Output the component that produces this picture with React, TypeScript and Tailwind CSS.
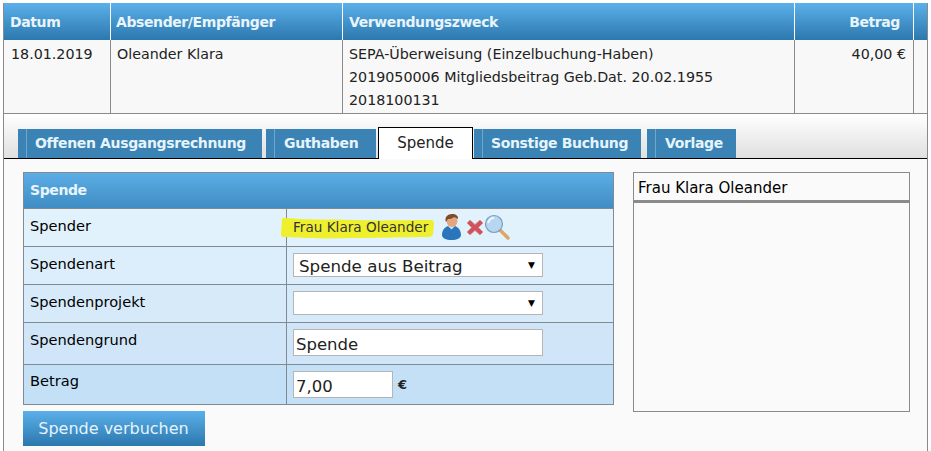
import React from 'react';

function Tab({ label, w, ml, pl }: { label: string; w: string; ml: string; pl: string }) {
  return (
    <div className={`flex h-[29px] items-center bg-[#3b83b5] font-bold tracking-[-0.35px] text-[#e6f4fc] ${w} ${ml}`}>
      <span className="h-full w-[9px] shrink-0 border-r border-[#6fa8ce]" />
      <span className={pl}>{label}</span>
    </div>
  );
}

function Highlight() {
  return (
    <svg className="absolute left-[-13px] top-[-1px]" width="156" height="24" viewBox="0 0 156 24">
      <path d="M2 5C1 2 3 1 6 2c20 2 40 1 70 2s50 0 74 0c3 0 4 1 4 4l-1 10c0 2-2 3-5 3-25 0-45 1-70 1-20 0-30 1-48 0-10 0-20-1-26-1-3 0-3-2-3-5z" fill="#eff02d" />
    </svg>
  );
}

function PersonIcon() {
  return (
    <svg width="19" height="26" viewBox="0 0 19 26">
      <path d="M0 21c0-5 3-8 6-9l3.500 3 3.500-3c3 1 6 4 6 9 0 3-4 5-9.500 5S0 24 0 21z" fill="#2a76bd" />
      <path d="M6 11.500l3.500 4 3.500-4-1-2H7z" fill="#d8e4ee" />
      <ellipse cx="10" cy="7" rx="5.500" ry="6" fill="#e2a77f" />
      <path d="M4 8C2 3 6 0 10 0s6.500 2 6 5c-2-1-3-2-4-2-2 2-5 2-6 2-1 1-1 2-2 3z" fill="#7d4a2b" />
    </svg>
  );
}

function CrossIcon() {
  return (
    <svg width="18" height="17" viewBox="0 0 18 17">
      <path d="M1 4l3-3 5 4.500L14 1l3 3-4.500 4.500L17 13l-3 3-5-4.500L4 16l-3-3 4.500-4.500z" fill="#d4505a" stroke="#c99a9e" strokeWidth="0.8" />
    </svg>
  );
}

function SearchIcon() {
  return (
    <svg width="26" height="26" viewBox="0 0 26 26">
      <path d="M16 16l8 8" stroke="#dca766" strokeWidth="3.500" strokeLinecap="round" />
      <circle cx="10" cy="10" r="8.500" fill="#b6d6f2" stroke="#7d9cbc" strokeWidth="1.200" />
      <path d="M4 9c1-3 3-5 6-5" stroke="#eef7ff" strokeWidth="2" fill="none" />
    </svg>
  );
}

function Arrow() {
  return <span className="text-[9px] leading-none text-black">▼</span>;
}

function FormRow({ label, h, bg, children, last }: { label: string; h: string; bg: string; children: React.ReactNode; last?: boolean }) {
  return (
    <div className={`flex ${h} ${bg} ${last ? '' : 'border-b border-[#7f8a93]'}`}>
      <div className={`w-[263px] shrink-0 border-r border-[#7f8a93] pl-[6px] text-[14.6px] text-black ${last ? 'pt-[4px]' : 'pt-[5px]'}`}>{label}</div>
      <div className="flex-1 pl-[6px]">{children}</div>
    </div>
  );
}

export default function App() {
  return (
    <div className="h-[451px] w-[931px] overflow-hidden bg-white pl-[3px] pt-[3px] text-[14.25px] leading-[23px] text-[#222] [font-family:'DejaVu_Sans',sans-serif]">
      <div className="h-[448px] w-[925px] border-x border-[#8a8a8a] bg-[#fafafa]">
        {/* transaction table */}
        <div className="flex h-[37px] bg-gradient-to-b from-[#5cb0ea] to-[#2b78ae] text-[14px] font-bold tracking-[-0.4px] text-[#e9f4fb]">
          <div className="w-[107px] border-r border-white pl-[6px] pt-[8px]">Datum</div>
          <div className="w-[232px] border-r border-white pl-[5px] pt-[8px]">Absender/Empfänger</div>
          <div className="w-[452px] border-r border-white pl-[6px] pt-[8px]">Verwendungszweck</div>
          <div className="w-[119px] border-r border-white pr-[13px] pt-[8px] text-right">Betrag</div>
          <div className="flex-1" />
        </div>
        <div className="flex h-[74px] border-b border-[#8a8a8a] bg-[#f8f8f8]">
          <div className="w-[107px] border-r border-[#8a8a8a] pl-[7px] pt-[3px]">18.01.2019</div>
          <div className="w-[232px] border-r border-[#8a8a8a] pl-[6px] pt-[3px]">Oleander Klara</div>
          <div className="w-[452px] border-r border-[#8a8a8a] pl-[6px] pt-[3px]">
            <div>SEPA-Überweisung (Einzelbuchung-Haben)</div>
            <div>2019050006 Mitgliedsbeitrag Geb.Dat. 20.02.1955</div>
            <div>2018100131</div>
          </div>
          <div className="w-[119px] border-r border-[#8a8a8a] pr-[7px] pt-[3px] text-right">40,00 €</div>
          <div className="flex-1" />
        </div>

        {/* tabs */}
        <div className="flex h-[45px] items-end border-b border-black bg-gradient-to-b from-white to-[#e0e0e0] pl-[14px] text-[14px]">
          <Tab label="Offenen Ausgangsrechnung" w="w-[244px]" ml="ml-0" pl="pl-[8px]" />
          <Tab label="Guthaben" w="w-[110px]" ml="ml-[4px]" pl="pl-[9px]" />
          <div className="relative top-[1px] ml-[2px] flex h-[32px] w-[95px] items-center justify-center border border-b-0 border-black bg-white text-[15px] text-[#222]">Spende</div>
          <Tab label="Sonstige Buchung" w="w-[167px]" ml="ml-[1px]" pl="pl-[8px]" />
          <Tab label="Vorlage" w="w-[89px]" ml="ml-[6px]" pl="pl-[9px]" />
        </div>

        {/* content */}
        <div className="flex gap-[19px] pl-[19px] pt-[13px]">
          <div className="w-[591px]">
            <div className="border border-[#7f8a93]">
              <div className="flex h-[36px] items-center border-b border-[#7f8a93] bg-gradient-to-b from-[#5cade6] to-[#3f8dc4] pl-[6px] text-[14px] font-bold tracking-[-0.4px] text-[#e9f4fb]">Spende</div>
              <FormRow label="Spender" h="h-[38px]" bg="bg-[#e1f2fd]">
                <div className="flex items-center pt-[5px]">
                  <div className="relative">
                    <Highlight />
                    <span className="relative block w-[135px] whitespace-nowrap text-[13.6px] leading-[20px] text-[#333]">Frau Klara Oleander</span>
                  </div>
                  <div className="ml-[14px] flex items-center">
                    <PersonIcon />
                    <span className="ml-[5px]"><CrossIcon /></span>
                    <SearchIcon />
                  </div>
                </div>
              </FormRow>
              <FormRow label="Spendenart" h="h-[38px]" bg="bg-[#dceefb]">
                <div className="mt-[6px] flex h-[24px] w-[250px] items-center justify-between border border-[#b5b5b5] bg-white pl-[5px] pr-[7px] text-[16.7px] text-[#222]">
                  <span className="relative top-[1px]">Spende aus Beitrag</span>
                  <Arrow />
                </div>
              </FormRow>
              <FormRow label="Spendenprojekt" h="h-[38px]" bg="bg-[#d6eafa]">
                <div className="mt-[6px] flex h-[24px] w-[250px] items-center justify-end border border-[#b5b5b5] bg-white pr-[7px]">
                  <Arrow />
                </div>
              </FormRow>
              <FormRow label="Spendengrund" h="h-[42px]" bg="bg-[#d0e6f8]">
                <div className="mt-[6px] flex h-[27px] w-[250px] items-center border border-[#b5b5b5] bg-white pl-[2px] pt-[3px] text-[16.5px] text-[#222]">Spende</div>
              </FormRow>
              <FormRow label="Betrag" h="h-[39px]" bg="bg-[#c4e0f6]" last>
                <div className="mt-[6px] flex items-center">
                  <div className="flex h-[27px] w-[100px] items-center border border-[#b5b5b5] bg-white pl-[2px] pt-[3px] text-[16.5px] text-[#222]">7,00</div>
                  <span className="ml-[5px] text-[13px] font-bold">€</span>
                </div>
              </FormRow>
            </div>
            <button className="mt-[6px] h-[35px] w-[182px] bg-gradient-to-b from-[#5cb0ea] to-[#2b78ae] pr-[1px] text-[16px] text-[#e4f3fc]">Spende verbuchen</button>
          </div>
          <div className="h-[240px] w-[277px] border border-[#8a8a8a] bg-[#fafafa]">
            <div className="h-[30px] border-b-[3px] border-[#8a8a8a] pl-[4px] pt-[4px] text-[15px] text-black">Frau Klara Oleander</div>
          </div>
        </div>
      </div>
    </div>
  );
}
